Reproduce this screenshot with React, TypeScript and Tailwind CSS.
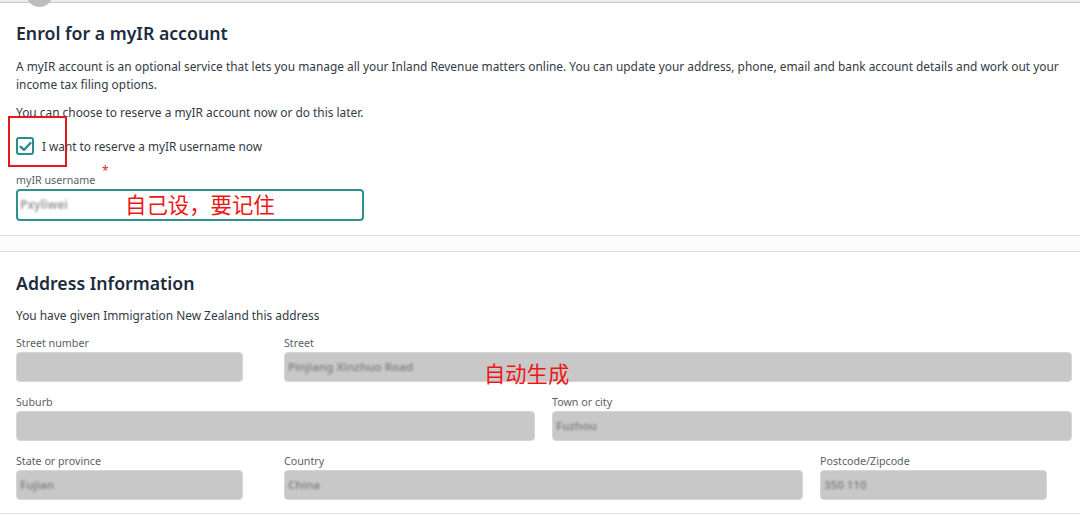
import React from "react";

const font = { fontFamily: '"Noto Sans", "Open Sans", "Noto Sans CJK SC", sans-serif' };

function Field({
  label,
  width,
  value,
}: {
  label: string;
  width: string;
  value?: string;
}) {
  return (
    <div className={`flex flex-col shrink-0 ${width}`}>
      <div className="h-[16px] text-[10.7px] leading-[16px] text-[#5a5f66]">{label}</div>
      <div className="mt-[1px] h-[30px] rounded-[4px] border border-[#d6d6d6] bg-[#c8c8c8] flex items-center px-[3px]">
        {value ? (
          <span className="text-[11.5px] font-semibold text-[#858585] blur-[1.2px]">{value}</span>
        ) : null}
      </div>
    </div>
  );
}

export default function App() {
  return (
    <div className="relative w-[1080px] h-[516px] overflow-hidden bg-white text-[#2f3540]" style={font}>
      {/* top bar */}
      <div className="h-[3px] border-b border-[#c9c9c9] bg-[#ececec]" />
      <div className="absolute left-[26px] top-[-20px] w-[27px] h-[27px] rounded-full bg-[#bdbdbd]" />

      {/* Section 1 */}
      <div className="pl-[16px] pr-[8px] pt-[16px] border-b border-[#dcdcdc] h-[233px]">
        <h1 className="text-[17.7px] leading-[28px] font-semibold text-[#1d2b3f]">Enrol for a myIR account</h1>
        <p className="mt-[10px] pr-[8px] text-[11.9px] leading-[18px] text-[#343a44]">
          A myIR account is an optional service that lets you manage all your Inland Revenue matters online. You can update your address, phone, email and bank account details and work out your income tax filing options.
        </p>
        <p className="mt-[10px] text-[11.9px] leading-[18px] text-[#343a44]">
          You can choose to reserve a myIR account now or do this later.
        </p>
        <div className="mt-[16px] flex items-center gap-[8px]">
          <div className="w-[18px] h-[18px] rounded-[3px] border-2 border-[#2a8c8c] flex items-center justify-center">
            <svg width="13" height="13" viewBox="0 0 12 12" fill="none">
              <path d="M1.6 6.3 L4.6 9.2 L10.6 2.8" stroke="#2a8c8c" strokeWidth="2.2" strokeLinecap="round" strokeLinejoin="round" />
            </svg>
          </div>
          <span className="text-[11.8px] leading-[18px] text-[#343a44]">I want to reserve a myIR username now</span>
        </div>
        <div className="mt-[18px] text-[10.7px] leading-[14px] text-[#5a5f66]">myIR username</div>
        <div className="mt-[2px] w-[348px] h-[32px] rounded-[4px] border-2 border-[#2f9090] flex items-center px-[2px]">
          <span className="text-[12px] font-semibold text-[#999999] blur-[1.3px]">Pxyliwei</span>
        </div>
      </div>

      {/* gap band */}
      <div className="h-[15px] bg-[#fcfcfc]" />

      {/* Section 2 */}
      <div className="border-t border-b border-[#dcdcdc] pl-[16px] pr-[8px] pt-[17px] h-[263px]">
        <h2 className="text-[17.7px] leading-[28px] font-semibold text-[#1d2b3f]">Address Information</h2>
        <p className="mt-[9px] text-[11.9px] leading-[18px] text-[#343a44]">You have given Immigration New Zealand this address</p>
        <div className="mt-[11px] flex gap-[41px]">
          <Field label="Street number" width="w-[227px]" />
          <Field label="Street" width="w-[788px]" value="Pinjiang Xinzhuo Road" />
        </div>
        <div className="mt-[12px] flex gap-[17px]">
          <Field label="Suburb" width="w-[519px]" />
          <Field label="Town or city" width="w-[520px]" value="Fuzhou" />
        </div>
        <div className="mt-[12px] flex">
          <Field label="State or province" width="w-[227px]" value="Fujian" />
          <div className="w-[41px] shrink-0" />
          <Field label="Country" width="w-[519px]" value="China" />
          <div className="w-[17px] shrink-0" />
          <Field label="Postcode/Zipcode" width="w-[227px]" value="350 110" />
        </div>
      </div>

      {/* annotations */}
      <div className="absolute left-[8px] top-[116px] w-[59px] h-[51px] border-2 border-[#e3191c]" />
      <div className="absolute left-[102px] top-[165px] text-[12px] leading-[12px] text-[#d0302c]">*</div>
      <div
        className="absolute left-[125px] top-[190px] text-[21.4px] leading-[28px] text-[#f01616]"
        style={{ fontFamily: '"Noto Sans CJK SC", sans-serif' }}
      >
        自己设，要记住
      </div>
      <div
        className="absolute left-[484px] top-[359px] text-[21.3px] leading-[28px] text-[#f01616]"
        style={{ fontFamily: '"Noto Sans CJK SC", sans-serif' }}
      >
        自动生成
      </div>
    </div>
  );
}
